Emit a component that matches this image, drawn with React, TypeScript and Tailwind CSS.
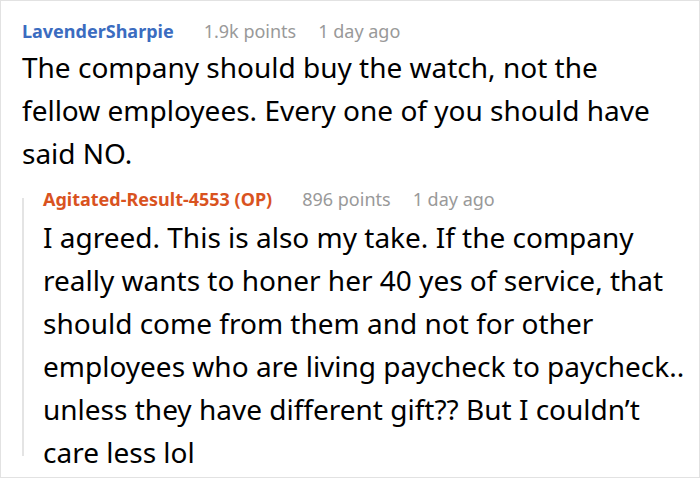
import React from 'react';

const Header: React.FC<{ name: string; points: string; age: string; nameClass: string }> = ({ name, points, age, nameClass }) => (
    <div className="flex items-center h-6 text-[18px] leading-6 whitespace-nowrap">
        <span className={`font-bold ${nameClass}`}>{name}</span>
        <span className="ml-[30px] text-[#999999]">{points}</span>
        <span className="ml-[22px] text-[#999999]">{age}</span>
    </div>
);

const App: React.FC = () => {
    return (
        <div
            className="w-[700px] h-[478px] overflow-hidden bg-white border border-[#e2e2e2] text-black"
            style={{ fontFamily: '"Noto Sans", "Open Sans", sans-serif' }}
        >
            {/* Parent comment */}
            <div className="pl-[21px] pt-[18px] pr-[20px]">
                <Header name="LavenderSharpie" points="1.9k points" age="1 day ago" nameClass="text-[#3b6cc0]" />
                <p className="mt-[3px] text-[28px] leading-[43px]">
                    The company should buy the watch, not the fellow employees. Every one of you should have said NO.
                </p>
            </div>

            {/* Reply */}
            <div className="flex pl-[21px] mt-[12px]">
                <div className="w-[2px] bg-[#e4e4e4] mt-[11px] mb-[18px] shrink-0" />
                <div className="pl-[19px] pr-[8px]">
                    <Header name="Agitated-Result-4553 (OP)" points="896 points" age="1 day ago" nameClass="text-[#d9531f]" />
                    <p className="mt-[5px] text-[28px] leading-[43px]">
                        I agreed. This is also my take. If the company really wants to honer her 40 yes of service, that should come from them and not for other employees who are living paycheck to paycheck.. unless they have different gift?? But I couldn’t care less lol
                    </p>
                </div>
            </div>
        </div>
    );
};

export default App;
